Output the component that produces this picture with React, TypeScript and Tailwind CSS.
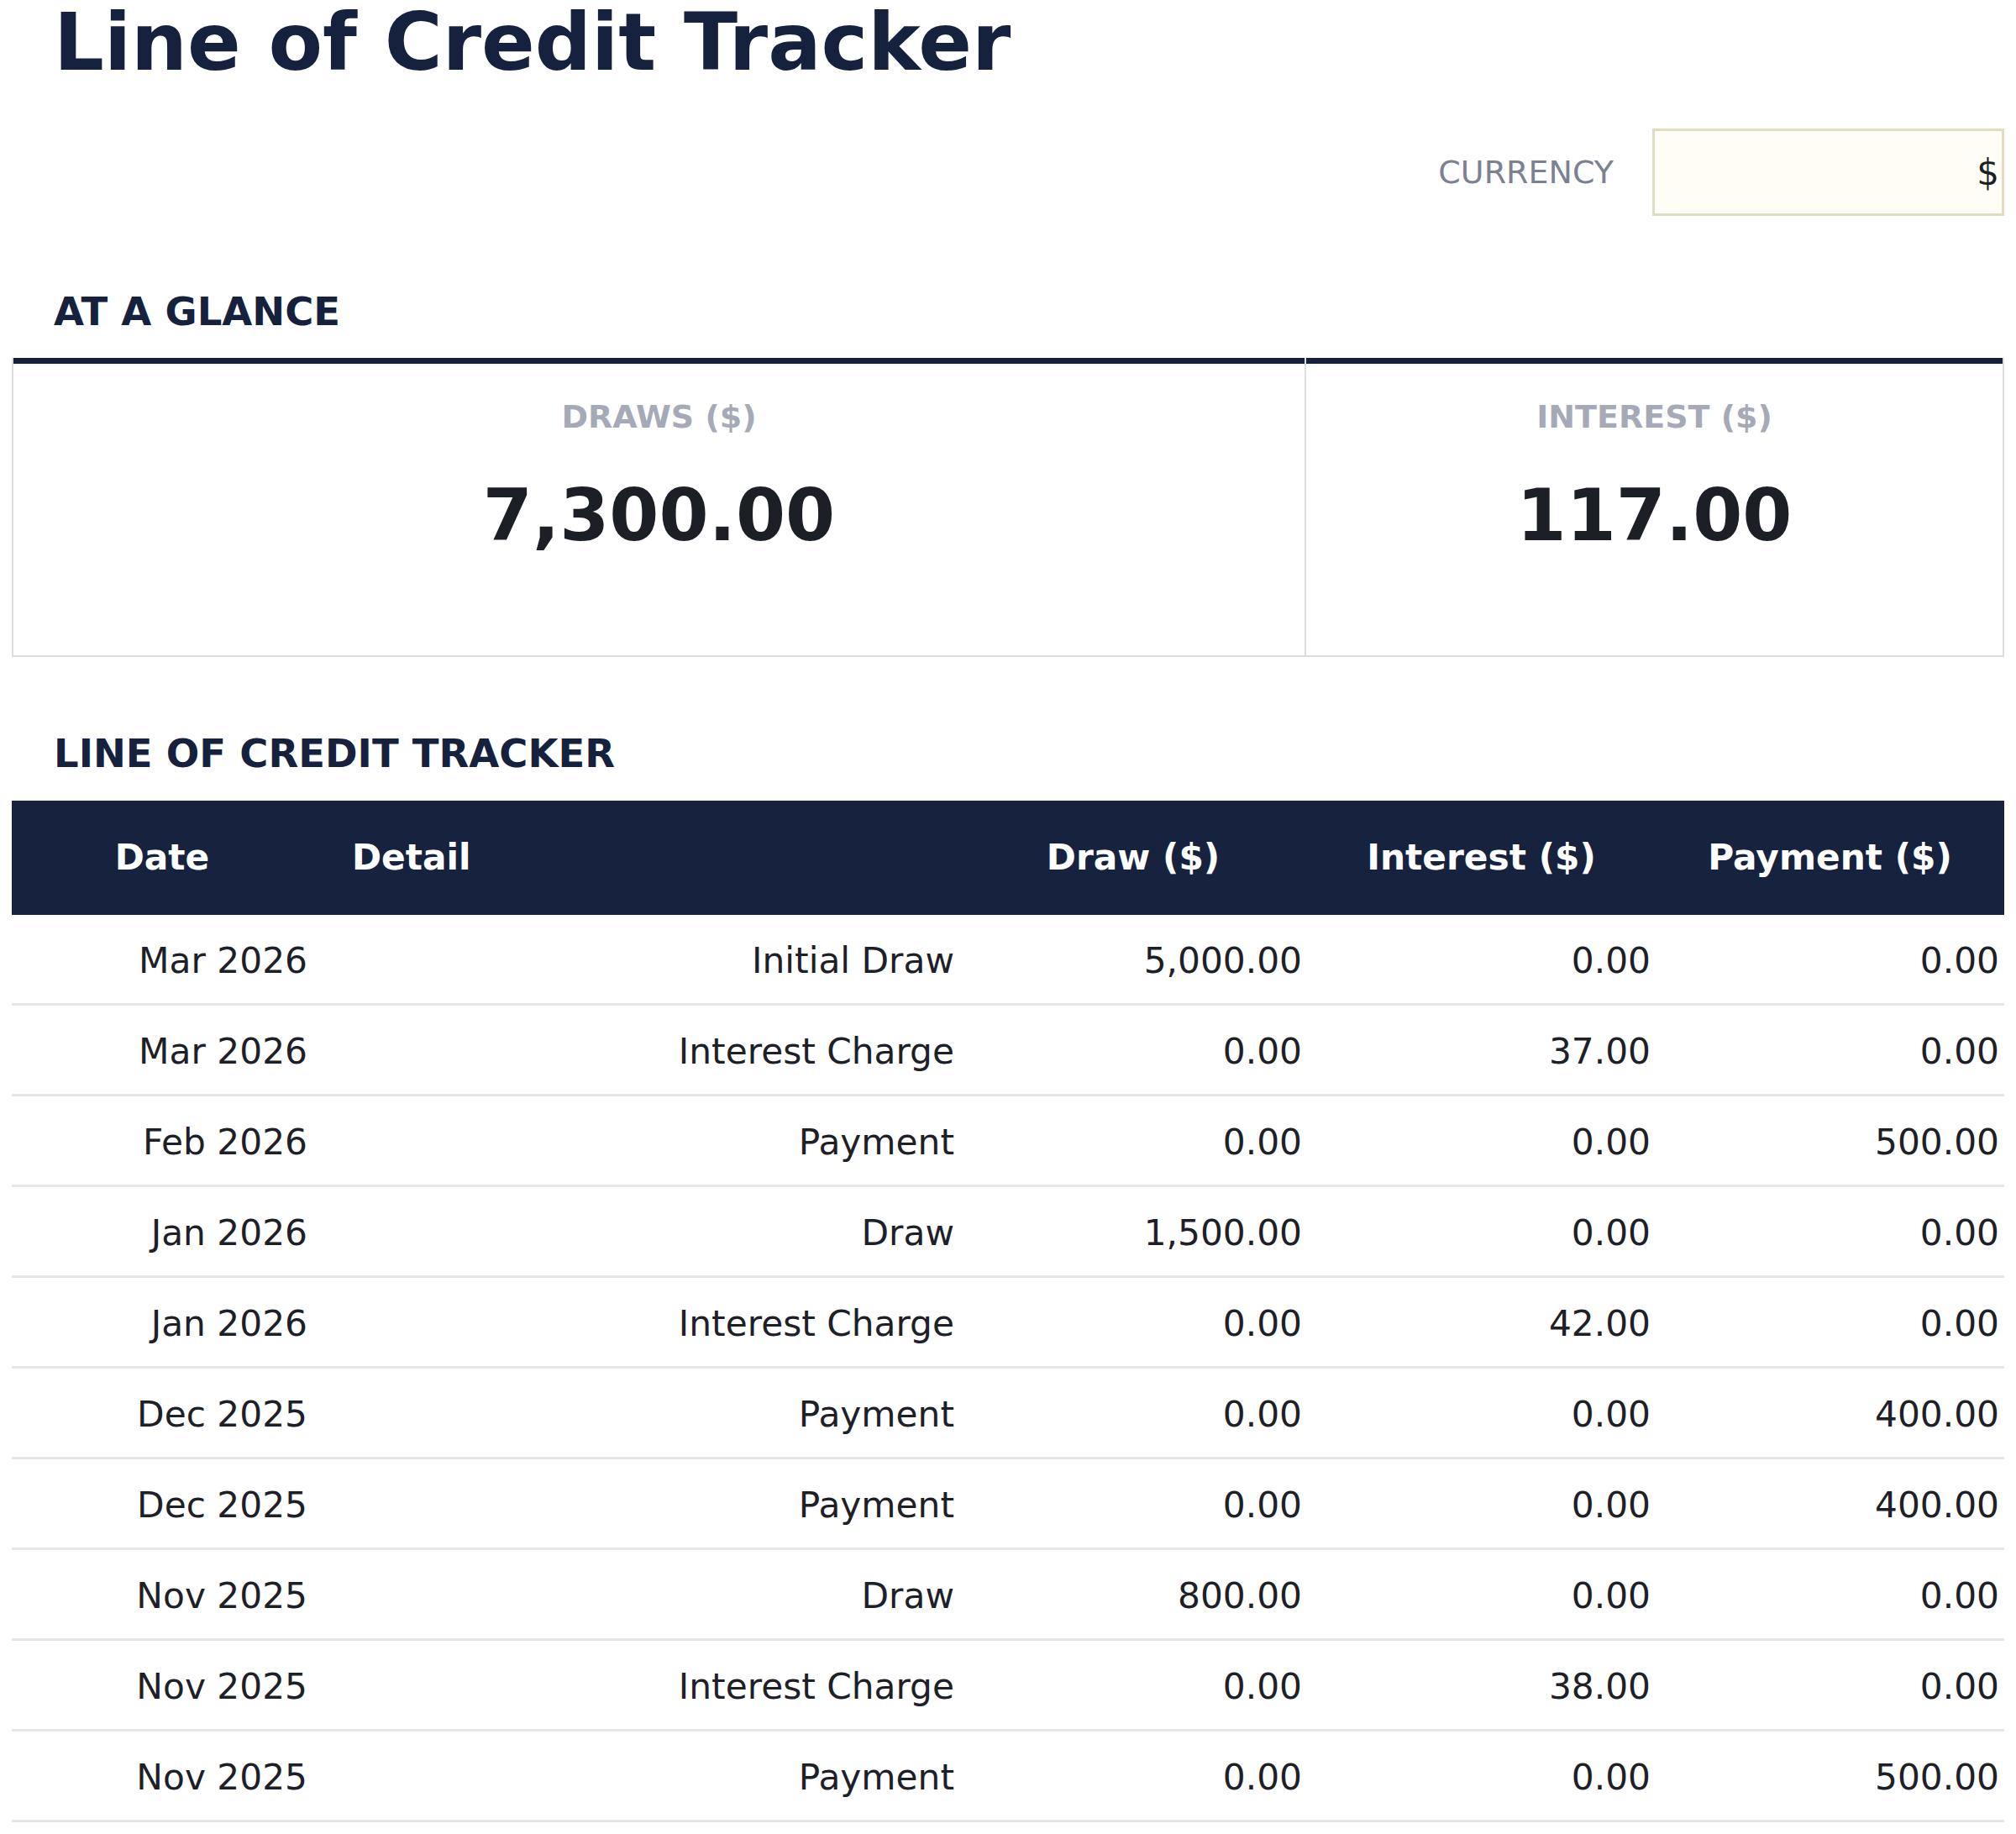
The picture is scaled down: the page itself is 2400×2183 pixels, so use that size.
const rows = [
  ['Mar 2026', 'Initial Draw', '5,000.00', '0.00', '0.00'],
  ['Mar 2026', 'Interest Charge', '0.00', '37.00', '0.00'],
  ['Feb 2026', 'Payment', '0.00', '0.00', '500.00'],
  ['Jan 2026', 'Draw', '1,500.00', '0.00', '0.00'],
  ['Jan 2026', 'Interest Charge', '0.00', '42.00', '0.00'],
  ['Dec 2025', 'Payment', '0.00', '0.00', '400.00'],
  ['Dec 2025', 'Payment', '0.00', '0.00', '400.00'],
  ['Nov 2025', 'Draw', '800.00', '0.00', '0.00'],
  ['Nov 2025', 'Interest Charge', '0.00', '38.00', '0.00'],
  ['Nov 2025', 'Payment', '0.00', '0.00', '500.00'],
];

const cols = 'grid grid-cols-[358px_770px_414px_415px_415px]';

function Stat({ label, value, className }: { label: string; value: string; className: string }) {
  return (
    <div className={`h-[356px] border-b-2 border-[#dcdde2] ${className}`}>
      <div className="h-[7px] bg-[#16223d]" />
      <div className="pt-[44px] text-center text-[38px] leading-[38px] font-bold text-[#a6aab7]">{label}</div>
      <div className="mt-[56px] text-center text-[85px] leading-[85px] font-bold text-[#1c1f26]">{value}</div>
    </div>
  );
}

export default function App() {
  return (
    <div className="w-[2400px] min-h-[2183px] bg-white px-[14px] font-['DejaVu_Sans',sans-serif]">
      <h1 className="pt-[4px] pl-[50px] text-[94px] leading-[94px] font-bold text-[#16213d]">
        Line of Credit Tracker
      </h1>

      <div className="mt-[55px] flex items-center justify-end gap-[46px]">
        <span className="text-[38px] leading-[38px] text-[#7c8191]">CURRENCY</span>
        <div className="flex h-[104px] w-[419px] items-center justify-end border-[3px] border-[#e2ddc0] bg-[#fffdf5] pr-[3px] text-[42px] text-[#1c1f26]">
          $
        </div>
      </div>

      <h2 className="mt-[91px] pl-[50px] text-[46.5px] leading-[46px] font-bold text-[#16213d]">AT A GLANCE</h2>

      <div className="mt-[32px] flex">
        <Stat label="DRAWS ($)" value="7,300.00" className="w-[1541px] border-x-2" />
        <Stat label="INTEREST ($)" value="117.00" className="w-[831px] border-r-2" />
      </div>

      <h2 className="mt-[92px] pl-[50px] text-[46.5px] leading-[46px] font-bold text-[#16213d]">
        LINE OF CREDIT TRACKER
      </h2>

      <div className="mt-[33px]">
        <div className={`${cols} h-[136px] items-center bg-[#17223e] text-[42.3px] font-bold text-white`}>
          <div className="text-center">Date</div>
          <div className="pl-[47px]">Detail</div>
          <div className="text-center">Draw ($)</div>
          <div className="text-center">Interest ($)</div>
          <div className="text-center">Payment ($)</div>
        </div>
        {rows.map((r, i) => (
          <div key={i} className={`${cols} h-[108px] items-center border-b-[3px] border-[#e5e6eb] pt-[4px] text-[42.3px] text-[#1e2028]`}>
            {r.map((c, j) => (
              <div key={j} className="pr-[6px] text-right">{c}</div>
            ))}
          </div>
        ))}
      </div>
    </div>
  );
}
